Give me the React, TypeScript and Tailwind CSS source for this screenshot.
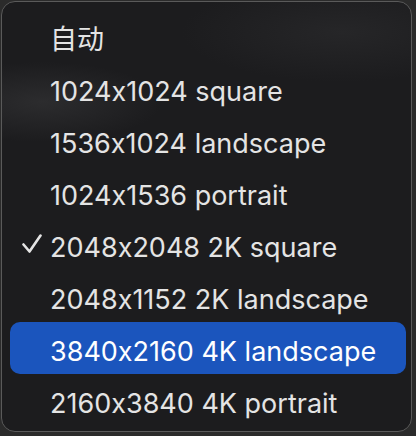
const options = [
	"自动",
	"1024x1024 square",
	"1536x1024 landscape",
	"1024x1536 portrait",
	"2048x2048 2K square",
	"2048x1152 2K landscape",
	"3840x2160 4K landscape",
	"2160x3840 4K portrait",
];

const selected = 4;
const highlighted = 6;

function Check() {
	return (
		<svg width="20" height="20" viewBox="0 0 20 20" className="absolute left-[12px] top-[16px]">
			<path d="M1.5 10.5 L7.5 17.5 L18.5 1.5" fill="none" stroke="#e4e4e4" strokeWidth="2.6" strokeLinecap="round" strokeLinejoin="round" />
		</svg>
	);
}

export default function App() {
	return (
		<div className="w-[416px] h-[436px] bg-[#2b2b2b] p-px font-['Inter','Noto_Sans_CJK_SC',sans-serif] [font-feature-settings:'calt'_0]">
			<div className="w-[411px] h-[431px] rounded-[14px] border border-[#5a5a5a] bg-[#1c1c1e] bg-[radial-gradient(ellipse_120px_40px_at_40px_100px,#2c2c2e,transparent),radial-gradient(ellipse_160px_50px_at_340px_30px,#262628,transparent)] pt-2 overflow-hidden">
				<ul className="flex flex-col">
					{options.map((label, i) => (
						<li
							key={label}
							className={
								"relative ml-2 mr-[5px] h-[52px] pt-2 leading-[44px] pl-10 rounded-[10px] text-[27px] " +
								(i === highlighted ? "bg-[#1b55bd] text-white" : "text-[#e4e4e4]")
							}
						>
							{i === selected && <Check />}
							{label}
						</li>
					))}
				</ul>
			</div>
		</div>
	);
}
